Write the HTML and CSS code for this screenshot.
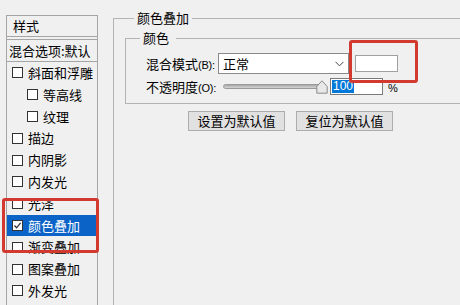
FILE: index.html
```html
<!DOCTYPE html>
<html lang="zh-CN">
<head>
    <meta charset="UTF-8">
    <title>图层样式 - 颜色叠加</title>
    <link rel="stylesheet" href="styles.css">
</head>
<body>

    <div class="panel">
        <div class="panelHead">样式</div>
        <div class="panelBlend">混合选项:默认</div>
        <ul class="fxList">
            <li class="fx"><span class="box"></span>斜面和浮雕</li>
            <li class="fx sub"><span class="box"></span>等高线</li>
            <li class="fx sub"><span class="box"></span>纹理</li>
            <li class="fx"><span class="box"></span>描边</li>
            <li class="fx"><span class="box"></span>内阴影</li>
            <li class="fx"><span class="box"></span>内发光</li>
            <li class="fx"><span class="box"></span>光泽</li>
            <li class="fx selected">
                <span class="box">
                    <svg width="9" height="9" viewBox="0 0 9 9"><path d="M1.5 4.5 L3.6 6.8 L7.6 1.8" fill="none" stroke="#333" stroke-width="1.3"/></svg>
                </span>颜色叠加
            </li>
            <li class="fx"><span class="box"></span>渐变叠加</li>
            <li class="fx"><span class="box"></span>图案叠加</li>
            <li class="fx"><span class="box"></span>外发光</li>
        </ul>
    </div>

    <div class="content">
        <fieldset class="group">
            <legend class="groupTitle">颜色叠加</legend>

            <fieldset class="group inner">
                <legend class="innerTitle">颜色</legend>

                <div class="row rowBlend">
                    <label class="rowLabel">混合模式<span class="key">(B):</span></label>
                    <div class="select">
                        <span>正常</span>
                        <svg width="9" height="6" viewBox="0 0 9 6"><path d="M0.5 0.8 L4.5 4.8 L8.5 0.8" fill="none" stroke="#444" stroke-width="1"/></svg>
                    </div>
                    <div class="swatch"></div>
                </div>

                <div class="row rowOpacity">
                    <label class="rowLabel">不透明度<span class="key">(O):</span></label>
                    <div class="slider">
                        <div class="track"></div>
                        <svg class="thumb" width="12" height="14" viewBox="0 0 12 14"><path d="M6 0.8 L11.2 6.5 L11.2 13.2 L0.8 13.2 L0.8 6.5 Z" fill="#e8e8e8" stroke="#8a8a8a" stroke-width="1"/></svg>
                    </div>
                    <div class="numInput"><span class="sel">100</span></div>
                    <span class="unit">%</span>
                </div>
            </fieldset>

            <div class="buttons">
                <button class="btn">设置为默认值</button>
                <button class="btn">复位为默认值</button>
            </div>
        </fieldset>
    </div>

    <!-- 红框标注 -->
    <div class="mark markFx"></div>
    <div class="mark markSwatch"></div>

</body>
</html>
```

FILE: styles.css
```css
body {
    margin: 0;
    padding: 0;
    width: 460px;
    height: 305px;
    overflow: hidden;
    background-color: #f0f0f0;
    font-family: "Noto Sans CJK SC", "Microsoft YaHei", sans-serif;
    font-size: 13px;
    color: #000;
    display: flex;
    align-items: flex-start;
    position: relative;
}

/* 左侧样式列表 */
.panel {
    margin: 15px 0 0 6px;
    width: 92px;
    height: 290px;
    box-sizing: border-box;
    border: 1px solid #a5a5a5;
    border-bottom: none;
    flex: none;
}

.panelHead {
    height: 20px;
    line-height: 20px;
    padding-left: 6px;
    border-bottom: 1px solid #a5a5a5;
}

.panelBlend {
    margin-top: 2px;
    height: 21px;
    line-height: 21px;
    padding-left: 2px;
    border-top: 1px solid #a5a5a5;
    border-bottom: 1px solid #a5a5a5;
    white-space: nowrap;
    overflow: hidden;
}

.fxList {
    list-style: none;
    margin: 0;
    padding: 0;
}

.fx {
    height: 21.8px;
    line-height: 21.8px;
    display: flex;
    align-items: center;
    padding-left: 5px;
    white-space: nowrap;
    overflow: hidden;
}

.fx.sub {
    padding-left: 20px;
}

.fx.selected {
    background-color: #0b63c8;
    color: #fff;
}

.box {
    width: 11px;
    height: 11px;
    box-sizing: border-box;
    border: 1px solid #333;
    background-color: #fff;
    margin-right: 5px;
    display: flex;
    align-items: center;
    justify-content: center;
    flex: none;
}

/* 右侧设置区 */
.content {
    margin-left: 15px;
    width: 347px;
    height: 305px;
    overflow: hidden;
    flex: none;
}

.group {
    margin: 10px 0 0 0;
    padding: 0;
    width: 400px;
    height: 320px;
    border: 1px solid #b4b4b4;
    min-inline-size: 0;
}

.groupTitle {
    margin-left: 20px;
    padding: 0 3px;
    line-height: 16px;
}

.group.inner {
    margin: 4px 0 0 11px;
    height: auto;
    padding: 0 0 8px 0;
}

.innerTitle {
    margin-left: 14px;
    padding: 0 7px 0 3px;
    line-height: 16px;
}

.row {
    display: flex;
    align-items: center;
    padding-left: 20px;
}

.rowBlend {
    margin-top: 7px;
    height: 21px;
}

.rowOpacity {
    margin-top: 4px;
    height: 17px;
}

.rowLabel {
    width: 72px;
    flex: none;
    white-space: nowrap;
}

.key {
    font-family: "Liberation Sans", Arial, sans-serif;
    font-size: 11px;
    letter-spacing: -0.2px;
}

.select {
    width: 131px;
    height: 21px;
    flex: none;
    box-sizing: border-box;
    border: 1px solid #8a8a8a;
    background-color: #fff;
    display: flex;
    align-items: center;
    justify-content: space-between;
    padding: 0 4px 0 4px;
}

.swatch {
    margin-left: 6px;
    width: 43px;
    height: 17px;
    flex: none;
    box-sizing: border-box;
    border: 1px solid #a0a0a0;
    background-color: #fff;
}

.slider {
    position: relative;
    margin-left: 5px;
    width: 105px;
    height: 17px;
    flex: none;
    display: flex;
    align-items: center;
}

.track {
    width: 99px;
    height: 5px;
    box-sizing: border-box;
    border: 1px solid #9a9a9a;
    border-radius: 3px;
    background: linear-gradient(#a8a8a8, #d6d6d6);
}

.thumb {
    position: absolute;
    right: 0;
    top: 2px;
}

.numInput {
    margin-left: 2px;
    width: 53px;
    height: 17px;
    flex: none;
    box-sizing: border-box;
    border: 1px solid #7a7a7a;
    background-color: #fff;
    display: flex;
    align-items: center;
    padding-left: 1px;
    font-family: "Liberation Sans", Arial, sans-serif;
    font-size: 12px;
}

.sel {
    background-color: #0078d7;
    color: #fff;
    line-height: 13px;
    padding: 0 1px;
}

.unit {
    margin-left: 5px;
    font-family: "Liberation Sans", Arial, sans-serif;
    font-size: 11px;
    padding-top: 2px;
}

.buttons {
    margin-top: 7px;
    padding-left: 74px;
    display: flex;
    gap: 11px;
}

.btn {
    width: 97px;
    height: 20px;
    padding: 0;
    box-sizing: border-box;
    border: 1px solid #adadad;
    background-color: #e1e1e1;
    font-family: inherit;
    font-size: 13px;
    line-height: 18px;
    color: #000;
}

/* 红框 */
.mark {
    position: absolute;
    box-sizing: border-box;
    border: 3px solid #d23a2f;
    border-radius: 3px;
}

.markFx {
    left: 2px;
    top: 198px;
    width: 97px;
    height: 55px;
}

.markSwatch {
    left: 349px;
    top: 40px;
    width: 69px;
    height: 43px;
}
```
